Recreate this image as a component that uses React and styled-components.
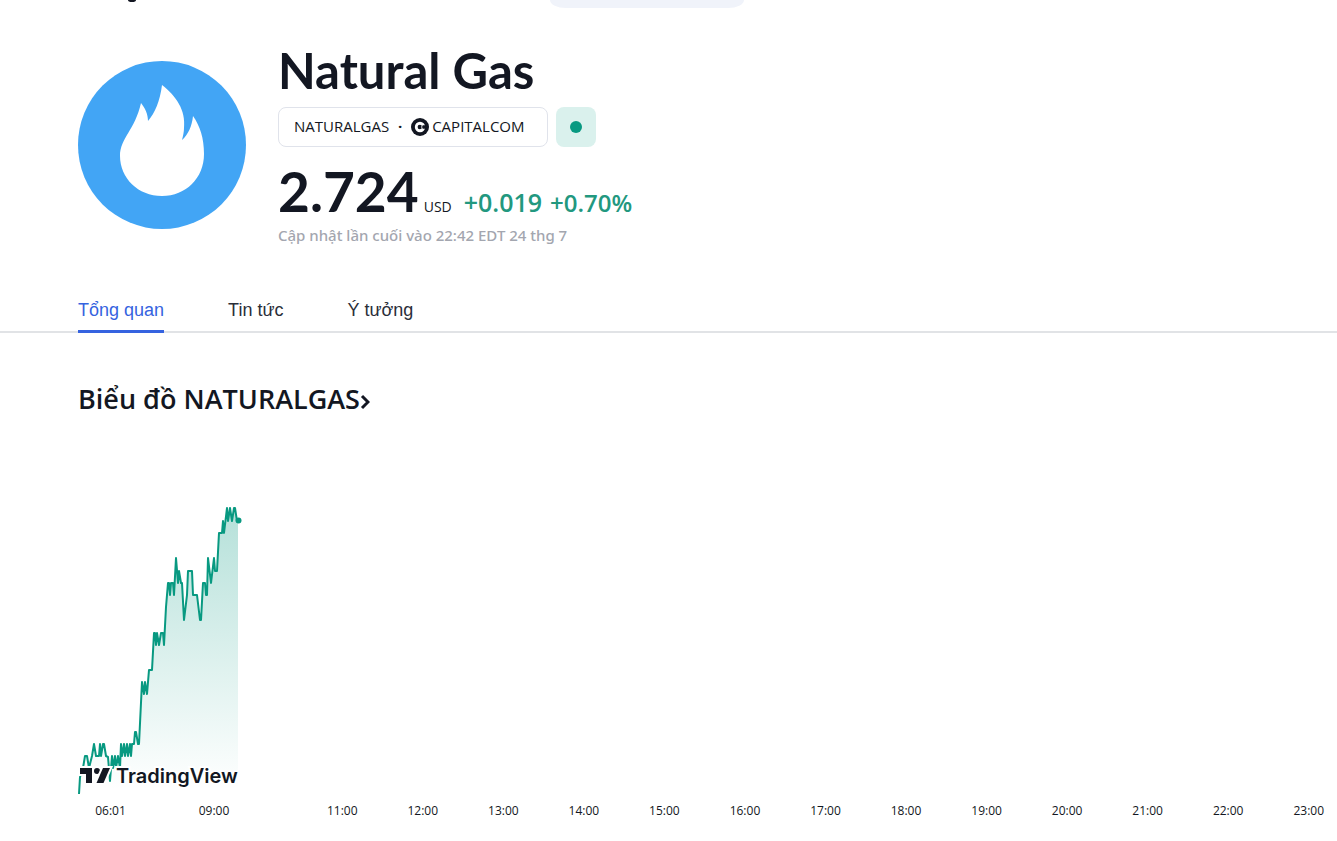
import React from "react";
import styled, { createGlobalStyle } from "styled-components";

const GlobalStyle = createGlobalStyle`
  * {
    box-sizing: border-box;
  }
  body {
    margin: 0;
    background: #fff;
    color: #131722;
    font-family: "Open Sans", "Noto Sans", sans-serif;
    overflow-x: hidden;
  }
  h1, h2, p {
    margin: 0;
  }
`;

const TopBar = styled.div`
  display: flex;
  align-items: flex-start;
  height: 8px;
  padding-left: 128px;
`;
const BrandTail = styled.span`
  width: 8px;
  height: 2px;
  border-radius: 0 0 4px 4px / 0 0 2px 2px;
  background: #131722;
`;
const SearchPill = styled.div`
  width: 194px;
  height: 8px;
  margin-left: 414px;
  border-radius: 0 0 16px 16px / 0 0 8px 8px;
  background: #f0f3fa;
`;

const Header = styled.header`
  display: flex;
  gap: 32px;
  padding: 34px 78px 0;
`;
const SymbolLogo = styled.svg`
  flex: none;
  width: 168px;
  height: 168px;
  margin-top: 19px;
`;
const Title = styled.h1`
  font-family: Lato, sans-serif;
  font-size: 49px;
  line-height: 56px;
  font-weight: 700;
`;
const Badges = styled.div`
  display: flex;
  gap: 8px;
  margin-top: 9px;
`;
const SymbolButton = styled.button`
  display: flex;
  align-items: center;
  width: 270px;
  height: 40px;
  padding: 0 15px 2px;
  border: 1px solid #e0e3eb;
  border-radius: 8px;
  background: #fff;
  color: #131722;
  font-family: "Open Sans", sans-serif;
  font-size: 15px;
  line-height: 24px;
`;
const Separator = styled.span`
  width: 22px;
  font-weight: 700;
  text-align: center;
`;
const ExchangeLogo = styled.svg`
  width: 18px;
  height: 18px;
  margin-top: 2px;
  margin-right: 3px;
`;
const StatusButton = styled.button`
  display: flex;
  align-items: center;
  justify-content: center;
  width: 40px;
  height: 40px;
  padding: 0;
  border: 0;
  border-radius: 8px;
  background: #daf1ed;
`;
const StatusDot = styled.span`
  width: 12px;
  height: 12px;
  border-radius: 50%;
  background: #089981;
`;
const PriceRow = styled.div`
  display: flex;
  align-items: baseline;
  height: 64px;
  margin-top: 12px;
  white-space: nowrap;
`;
const Price = styled.span`
  font-family: Lato, sans-serif;
  font-size: 55px;
  line-height: 64px;
  font-weight: 700;
`;
const Currency = styled.span`
  margin-left: 5px;
  font-size: 14px;
`;
const Change = styled.span`
  margin-left: ${(props) => (props.$first ? 12 : 8)}px;
  color: #22987f;
  font-size: ${(props) => (props.$first ? 25 : 24)}px;
  font-weight: 600;
`;
const Updated = styled.p`
  margin-top: 2px;
  color: #a3a6af;
  font-family: "Noto Sans", sans-serif;
  font-size: 15px;
  line-height: 20px;
  font-weight: 500;
`;

const Tabs = styled.nav`
  display: flex;
  gap: 64px;
  height: 40px;
  margin-top: 48px;
  padding: 0 78px;
  border-bottom: 2px solid #e1e3e6;
`;
const Tab = styled.a`
  height: 40px;
  border-bottom: 3px solid ${(props) => (props.$active ? "#3563e0" : "transparent")};
  color: ${(props) => (props.$active ? "#3563e0" : "#2a2e39")};
  font-family: "Liberation Sans", Arial, sans-serif;
  font-size: 18px;
  line-height: 34px;
  text-decoration: none;
`;

const Section = styled.section`
  padding-top: 48px;
`;
const SectionTitle = styled.h2`
  padding: 0 78px;
  font-size: 27px;
  line-height: 36px;
  font-weight: 600;
`;
const TitleLink = styled.a`
  display: inline-flex;
  align-items: center;
  color: inherit;
  text-decoration: none;
`;
const Chevron = styled.svg`
  width: 10px;
  height: 16px;
  margin-top: 6px;
`;
const ChartPane = styled.div`
  position: relative;
  height: 310px;
  margin-top: 67px;
  margin-left: 78px;
`;
const Plot = styled.svg`
  display: block;
  width: 168px;
  height: 310px;
`;
const Brand = styled.a`
  position: absolute;
  left: 2px;
  bottom: 6px;
  display: flex;
  align-items: center;
  gap: 5px;
  color: #131722;
  font-family: Inter, sans-serif;
  font-size: 20px;
  line-height: 24px;
  font-weight: 600;
  text-decoration: none;
  paint-order: stroke fill;
  -webkit-text-stroke: 4px #fff;
`;
const BrandMark = styled.svg`
  width: 31px;
  height: 16px;
  overflow: visible;
`;
const TimeAxis = styled.div`
  display: grid;
  grid-template-columns: 103px 104px 36px repeat(13, 1fr);
  margin-right: -12px;
  padding: 7px 0 20px 59px;
  font-size: 12px;
  line-height: 20px;
  text-align: center;
`;

const tabs = ["Tổng quan", "Tin tức", "Ý tưởng"];

const times = ["06:01", "09:00", ""];
for (let hour = 11; hour <= 23; hour++) {
  times.push(`${hour}:00`);
}

// price ticks, x from the left edge of the pane, y from its top
const ticks = [
  [1, 310], [2, 293], [5, 284], [7, 272], [9, 272], [11, 284], [14, 272],
  [16, 260], [18, 272], [21, 272], [22, 260], [23, 272], [25, 260], [26, 260],
  [28, 272], [30, 273], [32, 297], [34, 272], [35, 284], [37, 272], [38, 284],
  [40, 272], [42, 284], [43, 260], [44, 272], [46, 260], [47, 272], [49, 260],
  [50, 272], [52, 260], [53, 272], [54, 260], [56, 260], [57, 248], [58, 248],
  [60, 260], [61, 260], [64, 198], [66, 210], [67, 198], [69, 210], [71, 186],
  [74, 186], [76, 149], [77, 149], [78, 161], [79, 149], [81, 161], [83, 149],
  [85, 149], [86, 161], [88, 123], [90, 99], [91, 99], [92, 111], [93, 99],
  [95, 99], [96, 111], [98, 74], [100, 99], [101, 87], [103, 99], [104, 99],
  [106, 136], [109, 111], [110, 87], [114, 87], [115, 111], [119, 111],
  [122, 136], [123, 136], [125, 99], [127, 99], [128, 111], [129, 111],
  [130, 74], [133, 99], [136, 74], [137, 87], [139, 87], [141, 49], [144, 49],
  [145, 37], [146, 49], [149, 24], [150, 37], [152, 24], [154, 37], [156, 24],
  [157, 24], [159, 37], [161, 37],
];
const linePath = `M${ticks.map((tick) => tick.join(" ")).join("L")}`;

const PriceChart = () => (
  <ChartPane>
    <Plot viewBox="0 0 168 310" role="img" aria-label="NATURALGAS">
      <defs>
        <linearGradient id="area" x1="0" y1="24" x2="0" y2="306" gradientUnits="userSpaceOnUse">
          <stop offset="0" stopColor="#089981" stopOpacity="0.3" />
          <stop offset="1" stopColor="#089981" stopOpacity="0" />
        </linearGradient>
      </defs>
      <path d={`${linePath}H160V310H1Z`} fill="url(#area)" />
      <path d={linePath} fill="none" stroke="#089981" strokeWidth="2" strokeLinejoin="round" />
      <circle cx="160.500" cy="36.500" r="3" fill="#089981" />
    </Plot>
    <Brand href="#tradingview">
      <BrandMark viewBox="0 0 31 16">
        <g fill="#131722" stroke="#fff" strokeWidth="4" paintOrder="stroke">
          <path d="M0 0h12v15H6V6H0z" />
          <circle cx="17" cy="3" r="3" />
          <path d="M23 0h7l-6.500 15h-7z" />
        </g>
      </BrandMark>
      TradingView
    </Brand>
  </ChartPane>
);

const App = () => (
  <>
    <GlobalStyle />
    <TopBar>
      <BrandTail />
      <SearchPill />
    </TopBar>
    <Header>
      <SymbolLogo viewBox="0 0 168 168">
        <circle cx="84" cy="84" r="84" fill="#42a5f5" />
        <path
          fill="#fff"
          d="M84 24C98 35 108 49 106 67C106 71 105 75 104 79C110 74 114 65 115 55C122 65 126 77 126 93C126 117 108 135 84 135C60 135 42 117 42 95C42 77 57 69 63 42C67 47 70 53 70 60C77 52 82 40 84 24Z"
        />
      </SymbolLogo>
      <div>
        <Title>Natural Gas</Title>
        <Badges>
          <SymbolButton>
            NATURALGAS
            <Separator>·</Separator>
            <ExchangeLogo viewBox="0 0 18 18">
              <circle cx="9" cy="9" r="9" fill="#131722" />
              <circle cx="9" cy="9" r="5.200" fill="#fff" />
              <circle cx="8.800" cy="9" r="2.200" fill="#131722" />
              <path d="M10 9l2-1.800h3v3.600h-3z" fill="#131722" />
              <circle cx="10.800" cy="9" r="0.700" fill="#fff" />
            </ExchangeLogo>
            CAPITALCOM
          </SymbolButton>
          <StatusButton aria-label="Market open">
            <StatusDot />
          </StatusButton>
        </Badges>
        <PriceRow>
          <Price>2.724</Price>
          <Currency>USD</Currency>
          <Change $first>+0.019</Change>
          <Change>+0.70%</Change>
        </PriceRow>
        <Updated>Cập nhật lần cuối vào 22:42 EDT 24 thg 7</Updated>
      </div>
    </Header>
    <Tabs>
      {tabs.map((tab, index) => (
        <Tab href="#" key={tab} $active={index === 0}>
          {tab}
        </Tab>
      ))}
    </Tabs>
    <Section>
      <SectionTitle>
        <TitleLink href="#chart">
          Biểu đồ NATURALGAS
          <Chevron viewBox="0 0 10 16" fill="none" stroke="#131722" strokeWidth="3">
            <path d="M2 2l6 6-6 6" />
          </Chevron>
        </TitleLink>
      </SectionTitle>
      <PriceChart />
      <TimeAxis>
        {times.map((time, index) => (
          <span key={index}>{time}</span>
        ))}
      </TimeAxis>
    </Section>
  </>
);

export default App;
